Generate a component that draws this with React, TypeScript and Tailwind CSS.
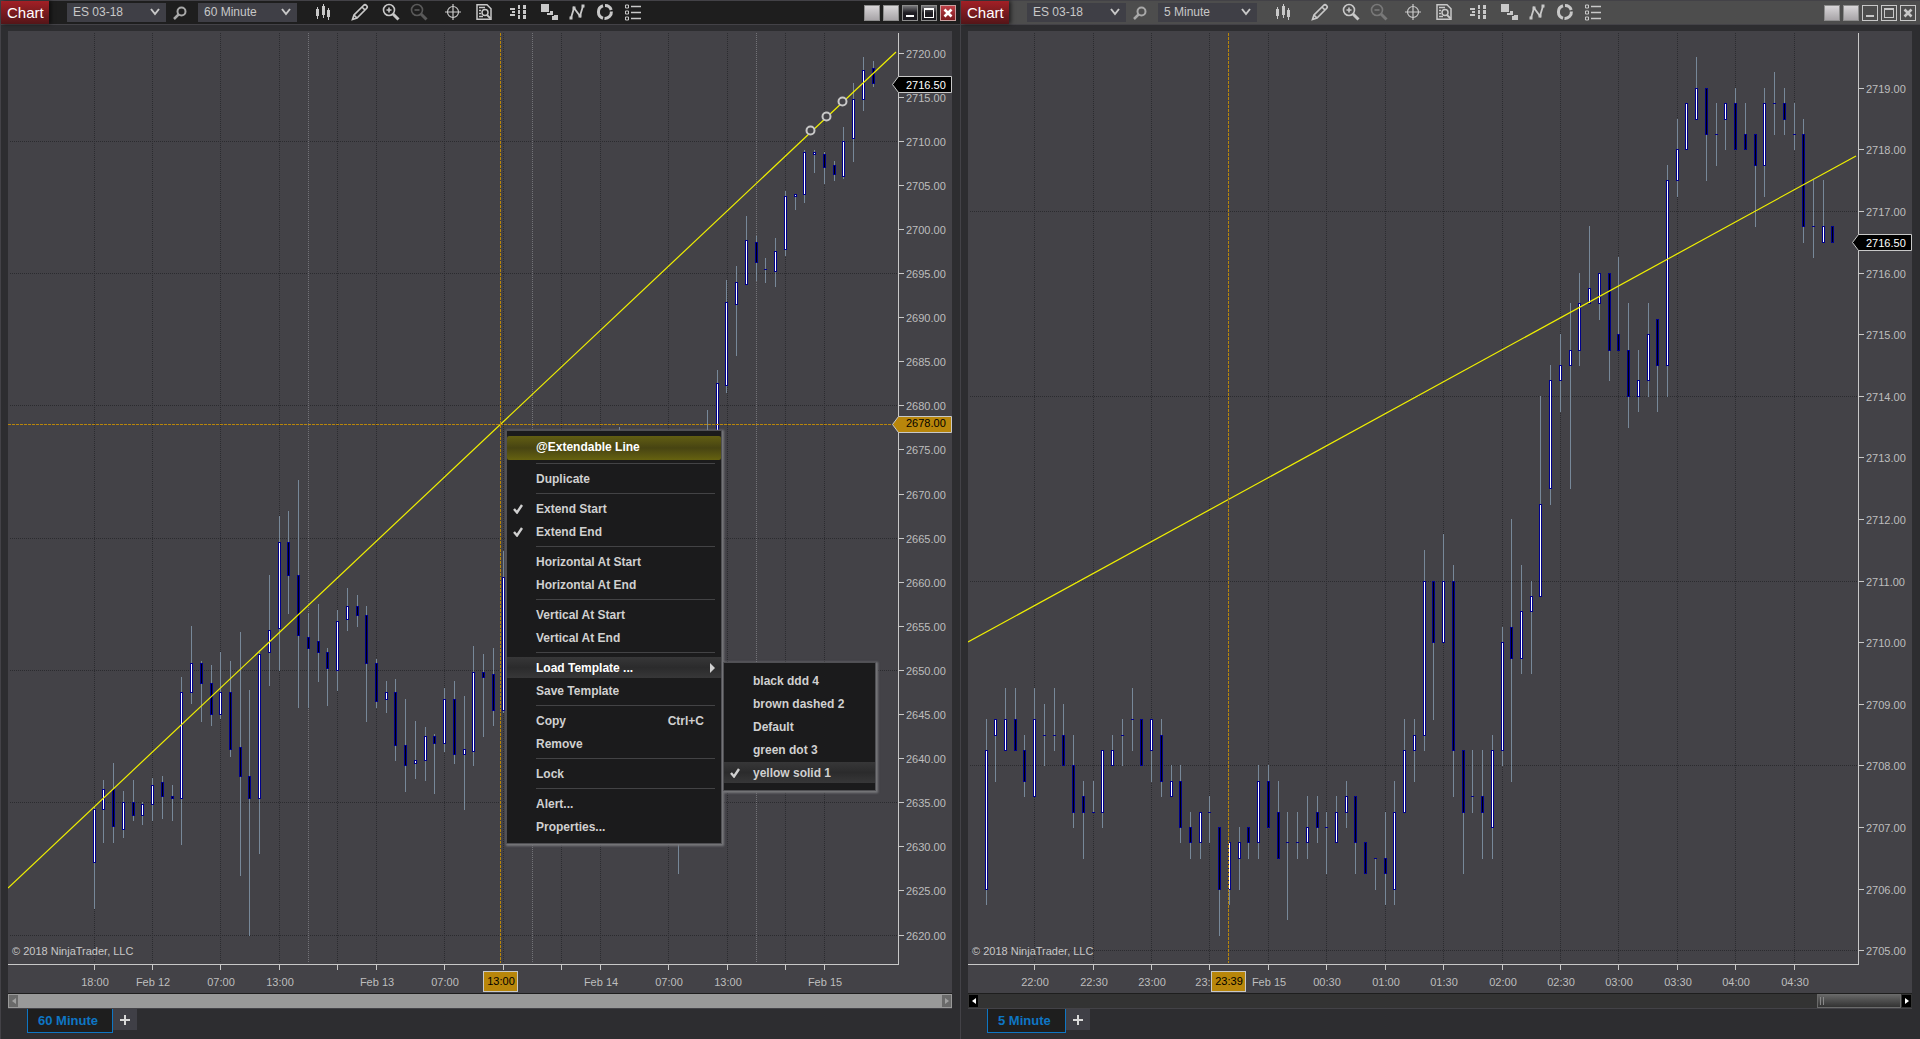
import React, { useState } from 'react'

// [bar, open, high, low, close]
type Candle = [number, number, number, number, number]

type ChartSpec = {
  symbol: string
  interval: string
  active: boolean
  candles: Candle[]
  firstBar: number
  topPrice: number
  topY: number
  pxPerPoint: number
  last: number
  priceTicks: number[]
  priceLines: number[]
  timeTicks: { x: number; label?: string; labelX?: number }[]
  sessions: number[]
  trend: [number, number, number, number]
  handles: [number, number][]
  cursorX: number
  cursorTime: string
  cursorPrice?: number
  scrollable: boolean
}

const BAR_STEP = 9.735
const FONT = '"Liberation Sans", Arial, sans-serif'

const hourCandles: Candle[] = [
  [0, 2628.25, 2634.5, 2623, 2634.25], [1, 2634.25, 2637.5, 2630.5, 2636.5], [2, 2636.5, 2639.5, 2630.5, 2632.25],
  [3, 2632, 2636.25, 2631, 2635], [4, 2635, 2637.5, 2633, 2633.5], [5, 2633.5, 2635, 2632.5, 2634.75],
  [6, 2634.75, 2637.75, 2633, 2637], [7, 2637.25, 2638, 2633.25, 2635.75], [8, 2635.75, 2637, 2633, 2635.5],
  [9, 2635.5, 2649.25, 2630.25, 2647.5], [10, 2647.5, 2655, 2646.25, 2650.75], [11, 2650.75, 2651, 2644.25, 2648.5],
  [12, 2648.5, 2650.5, 2643.75, 2645], [13, 2645, 2652, 2644.5, 2647.5], [14, 2647.5, 2651, 2640.25, 2641],
  [15, 2641.25, 2654.25, 2626.75, 2638], [16, 2638, 2647.75, 2620, 2635.5], [17, 2635.5, 2652.25, 2629.25, 2651.75],
  [18, 2652, 2660.75, 2648.25, 2654.5], [19, 2654.75, 2667.5, 2650, 2664.5], [20, 2664.5, 2668, 2656.5, 2660.75],
  [21, 2660.75, 2671.5, 2645.75, 2654], [22, 2653.75, 2656.5, 2645.75, 2652.5], [23, 2653.25, 2657.5, 2648.75, 2652],
  [24, 2652, 2652.5, 2646, 2650.25], [25, 2650, 2656.75, 2647.75, 2655.5], [26, 2655.75, 2659.25, 2654.5, 2657.25],
  [27, 2657.25, 2658.5, 2655, 2656.25], [28, 2656.25, 2657.25, 2644.25, 2650.75], [29, 2650.75, 2651.25, 2645.75, 2646.5],
  [30, 2646.75, 2648.75, 2645.25, 2647.5], [31, 2647.5, 2649, 2639.75, 2641.5], [32, 2641.5, 2646.75, 2636.25, 2639.25],
  [33, 2639.5, 2644.25, 2637.75, 2639.75], [34, 2639.75, 2643.5, 2637.5, 2642.5], [35, 2642.5, 2642.75, 2636, 2641.75],
  [36, 2641.75, 2648, 2640.75, 2646.75], [37, 2646.75, 2648.75, 2639.5, 2640.5], [38, 2640.5, 2647, 2634.25, 2641],
  [39, 2640.75, 2652.75, 2639.25, 2649.75], [40, 2649.75, 2651.75, 2642.5, 2649.25], [41, 2649.5, 2652.5, 2643.75, 2645.5],
  [42, 2645.5, 2663.5, 2645.25, 2660.5], [54, 2672, 2677.5, 2668, 2670], [60, 2640, 2650, 2627, 2645],
  [63, 2668, 2679.5, 2665, 2672], [64, 2670, 2684, 2668, 2682.5], [65, 2682.25, 2694.25, 2681.5, 2691.75],
  [66, 2691.5, 2695.75, 2685.75, 2694], [67, 2693.75, 2701.5, 2693.75, 2698.75], [68, 2698.5, 2699.25, 2694.25, 2696.25],
  [69, 2695.5, 2696.75, 2694, 2695.5], [70, 2695.25, 2699, 2693.5, 2697.5], [71, 2697.75, 2704.25, 2697, 2703.75],
  [72, 2703.75, 2704, 2702.25, 2704], [73, 2704, 2709, 2703, 2708.75], [74, 2708.5, 2709, 2706.5, 2708.75],
  [75, 2708.5, 2708.75, 2705.25, 2707], [76, 2707.25, 2707.75, 2705.5, 2706.25], [77, 2706, 2711.5, 2705.75, 2710],
  [78, 2710.25, 2716.5, 2707.75, 2714.75], [79, 2714.75, 2719.5, 2713.5, 2718], [80, 2718.25, 2719, 2716.25, 2716.5],
]

const fiveMinCandles: Candle[] = [
  [0, 2706, 2708.75, 2705.75, 2708.25], [1, 2708.5, 2708.75, 2707.75, 2708.75], [2, 2708.25, 2709.25, 2708.25, 2708.75],
  [3, 2708.75, 2709.25, 2708.25, 2708.25], [4, 2708.25, 2708.5, 2707.5, 2707.75], [5, 2707.5, 2709.25, 2707.5, 2708.75],
  [6, 2708.5, 2709, 2708, 2708.5], [7, 2708.5, 2709.25, 2708.25, 2708.5], [8, 2708.5, 2709, 2708, 2708],
  [9, 2708, 2708.5, 2707, 2707.25], [10, 2707.5, 2707.75, 2706.5, 2707.25], [11, 2707.25, 2707.75, 2707.25, 2707.25],
  [12, 2707.25, 2708.25, 2707, 2708.25], [13, 2708, 2708.5, 2708, 2708.25], [14, 2708.5, 2708.75, 2708, 2708.5],
  [15, 2708.75, 2709.25, 2708.25, 2708.75], [16, 2708.75, 2708.75, 2708, 2708], [17, 2708.25, 2708.75, 2707.75, 2708.75],
  [18, 2708.5, 2708.75, 2707.5, 2707.75], [19, 2707.5, 2708, 2707.5, 2707.75], [20, 2707.75, 2708, 2706.75, 2707],
  [21, 2707, 2707.25, 2706.5, 2706.75], [22, 2706.75, 2707.25, 2706.5, 2707.25], [23, 2707.25, 2707.5, 2706.75, 2707.25],
  [24, 2707, 2707, 2705.25, 2706], [25, 2706, 2706.75, 2705.75, 2706.75], [26, 2706.5, 2707, 2706, 2706.75],
  [27, 2707, 2707, 2706.5, 2706.75], [28, 2706.75, 2708, 2706.5, 2707.75], [29, 2707.75, 2708, 2707, 2707],
  [30, 2707.25, 2707.75, 2706.5, 2706.5], [31, 2706.75, 2707.25, 2705.5, 2706.75], [32, 2706.75, 2707.25, 2706.5, 2706.75],
  [33, 2706.75, 2707.5, 2706.5, 2707], [34, 2707.25, 2707.5, 2706.75, 2707], [35, 2707, 2707.25, 2706.25, 2707],
  [36, 2706.75, 2707.5, 2706.75, 2707.25], [37, 2707.25, 2707.75, 2707, 2707.5], [38, 2707.5, 2707.5, 2706.25, 2706.75],
  [39, 2706.75, 2706.75, 2706.25, 2706.25], [40, 2706.5, 2706.5, 2706, 2706.5], [41, 2706.5, 2707.25, 2705.75, 2706.25],
  [42, 2706, 2707.75, 2705.75, 2707.25], [43, 2707.25, 2708.75, 2707.25, 2708.25], [44, 2708.25, 2708.75, 2707.75, 2708.5],
  [45, 2708.5, 2711.5, 2708.25, 2711], [46, 2711, 2711, 2708.75, 2710], [47, 2710, 2711.75, 2710, 2711],
  [48, 2711, 2711.25, 2707.5, 2708.25], [49, 2708.25, 2708.25, 2706.25, 2707.25], [50, 2707.5, 2708.25, 2707.25, 2707.5],
  [51, 2707.5, 2708.25, 2706.5, 2707.25], [52, 2707, 2708.5, 2706.5, 2708.25], [53, 2708.25, 2710.25, 2708, 2710],
  [54, 2710.25, 2712, 2707.75, 2709.75], [55, 2709.75, 2711.25, 2709.5, 2710.5], [56, 2710.5, 2711, 2709.5, 2710.75],
  [57, 2710.75, 2714, 2710.75, 2712.25], [58, 2712.5, 2714.5, 2712.25, 2714.25], [59, 2714.25, 2715, 2713.75, 2714.5],
  [60, 2714.5, 2715.5, 2712.5, 2714.75], [61, 2714.75, 2716, 2714.5, 2715.5], [62, 2715.5, 2716.75, 2715.5, 2715.75],
  [63, 2715.5, 2716, 2715.25, 2716], [64, 2716, 2716, 2714.25, 2714.75], [65, 2715, 2716.25, 2714.75, 2714.75],
  [66, 2714.75, 2715.5, 2713.5, 2714], [67, 2714, 2714.75, 2713.75, 2714.25], [68, 2714.25, 2715.5, 2714, 2715],
  [69, 2715.25, 2715.25, 2713.75, 2714.5], [70, 2714.5, 2717.75, 2714, 2717.5], [71, 2717.5, 2718.5, 2717.25, 2718],
  [72, 2718, 2718.75, 2718, 2718.75], [73, 2718.5, 2719.5, 2718.5, 2719], [74, 2719, 2719, 2717.5, 2718.25],
  [75, 2718.25, 2718.75, 2717.75, 2718.25], [76, 2718.5, 2718.75, 2718, 2718.75], [77, 2718.75, 2719, 2718, 2718],
  [78, 2718.25, 2718.75, 2718, 2718], [79, 2718.25, 2718.25, 2716.75, 2717.75], [80, 2717.75, 2719, 2717.25, 2718.75],
  [81, 2718.75, 2719.25, 2718.25, 2718.75], [82, 2718.75, 2719, 2718.25, 2718.5], [83, 2718.25, 2718.75, 2718, 2718.25],
  [84, 2718.25, 2718.5, 2716.5, 2716.75], [85, 2716.75, 2717.5, 2716.25, 2716.75], [86, 2716.5, 2717.5, 2716.5, 2716.75],
  [87, 2716.75, 2716.75, 2716.5, 2716.5],
]

const hourChart: ChartSpec = {
  symbol: 'ES 03-18', interval: '60 Minute', active: true,
  candles: hourCandles, firstBar: 94.2, topPrice: 2720, topY: 53, pxPerPoint: 8.82, last: 2716.5,
  priceTicks: Array.from({ length: 21 }, (_, i) => 2720 - i * 5),
  priceLines: [2710, 2695, 2680, 2665, 2650, 2635, 2620],
  timeTicks: [
    { x: 94, label: '18:00' }, { x: 152, label: 'Feb 12' }, { x: 220, label: '07:00' }, { x: 279, label: '13:00' },
    { x: 337 }, { x: 376, label: 'Feb 13' }, { x: 444, label: '07:00' }, { x: 503 }, { x: 561 },
    { x: 600, label: 'Feb 14' }, { x: 668, label: '07:00' }, { x: 727, label: '13:00' }, { x: 785 }, { x: 824, label: 'Feb 15' },
  ],
  sessions: [308, 532, 756],
  trend: [8, 888, 896, 52],
  handles: [[810, 130], [826, 116], [842, 101]],
  cursorX: 500, cursorTime: '13:00', cursorPrice: 2678, scrollable: false,
}

const fiveMinChart: ChartSpec = {
  symbol: 'ES 03-18', interval: '5 Minute', active: false,
  candles: fiveMinCandles, firstBar: 26.05, topPrice: 2719, topY: 88.3, pxPerPoint: 61.6, last: 2716.5,
  priceTicks: Array.from({ length: 15 }, (_, i) => 2719 - i),
  priceLines: [2717, 2714, 2711, 2708, 2705],
  timeTicks: [
    { x: 74, label: '22:00' }, { x: 133, label: '22:30' }, { x: 191, label: '23:00' },
    { x: 249, label: '23:', labelX: 243 }, // cut short by the cursor time
    { x: 308, label: 'Feb 15' }, { x: 366, label: '00:30' }, { x: 425, label: '01:00' }, { x: 483, label: '01:30' },
    { x: 542, label: '02:00' }, { x: 600, label: '02:30' }, { x: 658, label: '03:00' }, { x: 717, label: '03:30' },
    { x: 775, label: '04:00' }, { x: 834, label: '04:30' },
  ],
  sessions: [],
  trend: [8, 642, 896, 156],
  handles: [],
  cursorX: 268, cursorTime: '23:39', scrollable: true,
}

const PriceTag: React.FC<{ y: number; price: number; gold?: boolean }> = ({ y, price, gold }) => (
  <g>
    <path d={`M892.5 ${y + 0.5}L898.5 ${y - 7.5}H951.5V${y + 8.5}H898.5Z`} fill={gold ? '#b8860b' : '#000'} stroke="#c8c8c8" />
    <text x="906" y={gold ? y + 3 : y + 5} fill={gold ? '#000' : '#fff'}>{price.toFixed(2)}</text>
  </g>
)

const Plot: React.FC<{ spec: ChartSpec }> = ({ spec }) => {
  const exactY = (p: number) => spec.topY + (spec.topPrice - p) * spec.pxPerPoint
  const yOf = (p: number) => Math.floor(exactY(p))
  const { cursorX, trend } = spec

  return (
    <svg viewBox="8 31 944 962" className="block w-full h-full bg-[#434247]" fontFamily={FONT} fontSize="11" role="img" aria-label={`${spec.symbol} ${spec.interval} chart`}>
      {/* Grid */}
      <g stroke="#2b2b2f" strokeDasharray="1 1" shapeRendering="crispEdges">
        {spec.timeTicks.map(t => <path key={t.x} d={`M${t.x + 0.5} 33V963`} />)}
        {spec.priceLines.map(p => <path key={p} d={`M10 ${yOf(p) + 0.5}H897`} />)}
      </g>
      <g stroke="#737378" strokeDasharray="1 1" shapeRendering="crispEdges">
        {spec.sessions.map(x => <path key={x} d={`M${x + 0.5} 33V963`} />)}
      </g>

      {/* Candles */}
      <g shapeRendering="crispEdges">
        {spec.candles.map(([bar, open, high, low, close]) => {
          const x = Math.floor(spec.firstBar + bar * BAR_STEP)
          const top = yOf(Math.max(open, close))
          const h = yOf(Math.min(open, close)) - top + 1
          return (
            <g key={bar}>
              <rect x={x} y={yOf(high)} width="1" height={yOf(low) - yOf(high) + 1} fill="#778899" />
              <rect x={x - 1} y={top} width="3" height={h} fill="#00008b" />
              {h > 2 && <rect x={x} y={top + 1} width="1" height={h - 2} fill={close > open ? '#fff' : '#000'} />}
            </g>
          )
        })}
      </g>

      <line x1={trend[0]} y1={trend[1]} x2={trend[2]} y2={trend[3]} stroke="#f0f000" strokeWidth="1.2" />
      {spec.handles.map(([x, y]) => <circle key={x} cx={x + 0.5} cy={y + 0.5} r="4" fill="#434247" stroke="#c8c8c8" strokeWidth="2" />)}

      <text x="12" y="955" fill="#c8c8c8">© 2018 NinjaTrader, LLC</text>

      {/* Axes */}
      <path d="M8 964.5H898.5V33" fill="none" stroke="#c8c8c8" shapeRendering="crispEdges" />
      <g fill="#bebebe">
        {spec.priceTicks.map(p => (
          <g key={p}>
            <path d={`M899 ${yOf(p) + 0.5}h5`} stroke="#c8c8c8" shapeRendering="crispEdges" />
            <text x="906" y={yOf(p) + 5}>{p.toFixed(2)}</text>
          </g>
        ))}
      </g>
      <g fill="#bebebe" textAnchor="middle">
        {spec.timeTicks.map(t => (
          <g key={t.x}>
            <path d={`M${t.x + 0.5} 965v5`} stroke="#c8c8c8" shapeRendering="crispEdges" />
            {t.label && <text x={t.labelX ?? t.x + 1} y="986">{t.label}</text>}
          </g>
        ))}
      </g>

      {/* Crosshair */}
      <g stroke="#b8860b" strokeDasharray="3 1" shapeRendering="crispEdges">
        <path d={`M${cursorX + 0.5} 33V963`} />
        {spec.cursorPrice && <path d={`M8 ${yOf(spec.cursorPrice) + 1.5}H892`} />}
      </g>
      <rect x={cursorX - 16.5} y="971.5" width="34" height="20" fill="#b8860b" stroke="#c8c8c8" />
      <text x={cursorX + 1} y="985" textAnchor="middle" fill="#000">{spec.cursorTime}</text>

      <PriceTag y={Math.round(exactY(spec.last))} price={spec.last} />
      {spec.cursorPrice && <PriceTag y={yOf(spec.cursorPrice) + 1} price={spec.cursorPrice} gold />}
    </svg>
  )
}

const tools: { name: string; className: string; icon: React.ReactNode }[] = [
  {
    name: 'Chart style', className: '',
    icon: <g fill="currentColor"><path d="M3 4h1v2h1v7H4v3H3v-3H2V6h1zM9 1h1v2h1v9h-1v3H9v-3H8V3h1zM14 5h1v2h1v7h-1v3h-1v-3h-1V7h1z" /></g>,
  },
  {
    name: 'Drawing tools', className: 'ml-[9px]',
    icon: <path d="M1.500 16.500L3 12 12.500 2.500Q14 1 15.500 2.500T15.500 5.500L6 15ZM11 4L14 7M3 12L6 15" fill="none" stroke="currentColor" strokeWidth="1.700" />,
  },
  {
    name: 'Zoom in', className: 'ml-[3px]',
    icon: <g fill="none" stroke="currentColor"><circle cx="7" cy="7" r="5.500" strokeWidth="1.600" /><path d="M4.500 7h5M7 4.500v5" strokeWidth="1.600" /><path d="M11 11l5.500 5.500" strokeWidth="3" /></g>,
  },
  {
    name: 'Zoom out', className: 'opacity-35',
    icon: <g fill="none" stroke="currentColor"><circle cx="7" cy="7" r="5.500" strokeWidth="1.600" /><path d="M4.500 7h5" strokeWidth="1.600" /><path d="M11 11l5.500 5.500" strokeWidth="3" /></g>,
  },
  {
    name: 'Crosshair', className: 'ml-[6px]',
    icon: <g fill="none" stroke="currentColor" strokeWidth="1.200"><circle cx="9" cy="9" r="5.500" /><path d="M1 9h16M9 1v16" /></g>,
  },
  {
    name: 'Data box', className: 'ml-[3px]',
    icon: <g fill="none" stroke="currentColor" strokeWidth="1.500"><path d="M2 1.700h10l4 4v10.600H2zM4 4.500h6M4 7.500h2M4 10.500h2M4 13.500h4" /><circle cx="10" cy="9.500" r="3" /><path d="M12 12l3.500 3.500" strokeWidth="2" /></g>,
  },
  {
    name: 'Chart trader', className: 'ml-[6px]',
    icon: <g fill="currentColor"><path d="M1 5h5v2H1zM3 8h3v2H3zM1 11h5v2H1zM9 2h2v4H9zM9 7h2v4H9zM9 12h2v4H9zM14 2h3v4h-3zM14 7h3v4h-3zM14 12h3v4h-3z" /></g>,
  },
  {
    name: 'Data series', className: 'ml-[3px]',
    icon: <path d="M1 1h8v8H1zM10 8h3v4H7v-2h3zM14 12h4v5h-6v-4h2z" fill="currentColor" />,
  },
  {
    name: 'Indicators', className: '',
    icon: <g fill="currentColor" stroke="currentColor"><path d="M3 15L6 5l6 8 3-10" fill="none" strokeWidth="1.800" /><path d="M1.500 13.500h3v3h-3zM4.500 3.500h3v3h-3zM10.500 11.500h3v3h-3zM13.500 1.500h3v3h-3z" stroke="none" /></g>,
  },
  {
    name: 'Strategies', className: '',
    icon: <g fill="none" stroke="currentColor" strokeWidth="3"><path d="M7 15.200A6.500 6.500 0 0 1 7 2.800M9 2.500A6.500 6.500 0 0 1 15.200 7M15.400 8.500A6.500 6.500 0 0 1 8.500 15.400" /></g>,
  },
  {
    name: 'Properties', className: '',
    icon: <g fill="none" stroke="currentColor"><path d="M7 3.500h10M7 9.500h10M7 15.500h10" strokeWidth="1.500" /><path d="M1.500 2h3v3h-3zM1.500 8h3v3h-3zM1.500 14h3v3h-3z" /></g>,
  },
]

const BarSelect: React.FC<{ label: string; value: string; options: string[] }> = ({ label, value, options }) => (
  <div className="relative">
    <select aria-label={label} defaultValue={value} className="block appearance-none w-[99px] h-[19px] pl-[6px] pb-px bg-[#3f3f46] text-[#c8c8c8] text-[12px] leading-[18px]">
      {options.map(o => <option key={o}>{o}</option>)}
    </select>
    <svg viewBox="0 0 10 8" className="absolute right-[6px] top-[5px] w-[10px] h-[8px] pointer-events-none text-[#c8c8c8]">
      <path d="M1 1L5 6 9 1" fill="none" stroke="currentColor" strokeWidth="2" />
    </svg>
  </div>
)

const TitleBar: React.FC<{ spec: ChartSpec }> = ({ spec }) => {
  const sysButton = `w-4 h-4 border flex items-center justify-center ${spec.active ? 'border-[#8c8c8c] bg-linear-to-b from-[#77777a] via-[#1e1c22] to-[#1e1c22] text-white' : 'border-[#c8c8c8] text-[#c8c8c8]'}`

  return (
    <header className={`flex items-center h-6 border-b border-[#434247] pr-1 ${spec.active ? 'bg-[#1e1e1e]' : 'bg-[#4d4d4d]'}`}>
      <h2 className="w-12 h-full pl-[6px] text-white text-[15px] leading-[23px] bg-linear-to-b from-[#a31f25] to-[#541518] shadow-[2px_0_4px_rgba(0,0,0,0.6)]">Chart</h2>
      <div className="flex items-center ml-[18px]">
        <BarSelect label="Instrument" value={spec.symbol} options={['ES 03-18', 'NQ 03-18', 'YM 03-18']} />
        <button aria-label="Find instrument" className="w-[32px] pr-1 flex justify-center text-[#a8a8a8]">
          <svg viewBox="0 0 14 14" className="w-[14px] h-[14px]" fill="none" stroke="currentColor">
            <circle cx="8.500" cy="5.500" r="4" strokeWidth="2" />
            <path d="M5.500 8.500L1 13" strokeWidth="2.500" />
          </svg>
        </button>
        <BarSelect label="Interval" value={spec.interval} options={['5 Minute', '15 Minute', '60 Minute']} />
      </div>
      <div className="flex items-center ml-3 pb-px text-[#c8c8c8]">
        {tools.map(t => (
          <button key={t.name} aria-label={t.name} className={`w-7 flex justify-center ${t.className}`}>
            <svg viewBox="0 0 18 18" className="w-[18px] h-[18px]">{t.icon}</svg>
          </button>
        ))}
      </div>
      <div className="flex gap-[3px] ml-auto">
        <button aria-label="Link instrument" className="w-4 h-4 border border-[#8c8c8c] bg-linear-to-b from-[#d8d6d8] to-[#a8a4a8]" />
        <button aria-label="Link interval" className="w-4 h-4 border border-[#8c8c8c] bg-linear-to-b from-[#d8d6d8] to-[#a8a4a8]" />
        <button aria-label="Minimize" className={sysButton}>
          <svg viewBox="0 0 14 14" className="w-[14px] h-[14px]"><path d="M3 9h8v2H3z" fill="currentColor" /></svg>
        </button>
        <button aria-label="Maximize" className={sysButton}>
          <svg viewBox="0 0 14 14" className="w-[14px] h-[14px]"><path d="M2 2h10v10H2zM3 4v7h8V4z" fill="currentColor" fillRule="evenodd" /></svg>
        </button>
        <button aria-label="Close" className={spec.active ? 'w-4 h-4 border border-[#c8a0a0] bg-linear-to-b from-[#c04048] to-[#7a1a1e] flex items-center justify-center text-white' : sysButton}>
          <svg viewBox="0 0 14 14" className="w-[14px] h-[14px]"><path d="M3.500 3.500l7 7M10.500 3.500l-7 7" stroke="currentColor" strokeWidth="2.600" /></svg>
        </button>
      </div>
    </header>
  )
}

const ScrollBar: React.FC<{ scrollable: boolean }> = ({ scrollable }) => {
  const arrow = `w-[9px] h-3 flex items-center justify-center shrink-0 ${scrollable ? 'bg-black text-white' : 'bg-[#6a6a6a] text-[#a0a0a0]'}`
  return (
    <div className={`flex items-center h-4 px-px border-t border-b border-t-[#1e1e1e] border-b-[#434247] ${scrollable ? 'bg-[#333333]' : 'bg-[#999999]'}`}>
      <button aria-label="Scroll left" className={arrow}>
        <svg viewBox="0 0 4 6" className="w-1 h-[6px]"><path d="M4 0v6L0 3z" fill="currentColor" /></svg>
      </button>
      {scrollable && (
        <div className="flex gap-[2px] items-center w-[84px] h-[14px] ml-auto mr-px pl-[2px] border border-[#6a6a6a] bg-linear-to-b from-[#666666] to-[#333333]">
          <span className="w-px h-2 bg-[#888888]" />
          <span className="w-px h-2 bg-[#888888]" />
        </div>
      )}
      <button aria-label="Scroll right" className={scrollable ? arrow : `${arrow} ml-auto`}>
        <svg viewBox="0 0 4 6" className="w-1 h-[6px]"><path d="M0 0v6l4-3z" fill="currentColor" /></svg>
      </button>
    </div>
  )
}

const ChartWindow: React.FC<{ spec: ChartSpec }> = ({ spec }) => (
  <section className="flex flex-col min-w-0 min-h-0 border-t border-l border-[#434247] bg-[#2d2d30]">
    <TitleBar spec={spec} />
    <div className="flex-1 min-h-0 mt-[6px] ml-[7px] mr-2">
      <Plot spec={spec} />
    </div>
    <div className="ml-[7px] mr-2"><ScrollBar scrollable={spec.scrollable} /></div>
    <div className="flex h-[30px] pl-[26px]">
      <button className="h-6 pl-[10px] pr-[14px] border border-t-0 border-[#0e76c4] bg-[#1e1e1e] text-[#0e76c4] text-[13px] leading-[21px] font-bold">{spec.interval}</button>
      <button aria-label="Add tab" className="w-6 h-[21px] bg-[#3f3f46] flex items-center justify-center text-[#d8d8d8]">
        <svg viewBox="0 0 10 10" className="w-[10px] h-[10px]"><path d="M4 0h2v4h4v2H6v4H4V6H0V4h4z" fill="currentColor" /></svg>
      </button>
    </div>
  </section>
)

type MenuEntry = { label: string; checked?: boolean; shortcut?: string; submenu?: boolean }

const menuGroups: MenuEntry[][] = [
  [{ label: 'Duplicate' }],
  [{ label: 'Extend Start', checked: true }, { label: 'Extend End', checked: true }],
  [{ label: 'Horizontal At Start' }, { label: 'Horizontal At End' }],
  [{ label: 'Vertical At Start' }, { label: 'Vertical At End' }],
  [{ label: 'Load Template ...', submenu: true }, { label: 'Save Template' }],
  [{ label: 'Copy', shortcut: 'Ctrl+C' }, { label: 'Remove' }],
  [{ label: 'Lock' }],
  [{ label: 'Alert...' }, { label: 'Properties...' }],
]

const templates = ['black ddd 4', 'brown dashed 2', 'Default', 'green dot 3', 'yellow solid 1']

const panel = 'absolute flex flex-col bg-[#1b1b1c] border border-[#505054] shadow-[1px_1px_2px_1px_#77777b] text-[12px] font-bold text-[#d0d0d0]'
const row = 'flex items-center w-full h-[21px] my-px text-left'
const rowActive = 'bg-linear-to-b from-[#373738] via-[#2b2b2c] to-[#373738]'

const Tick = () => (
  <svg viewBox="0 0 10 10" className="w-[10px] h-[10px]">
    <path d="M1 5L4 8.500 9 1" fill="none" stroke="#d0d0d0" strokeWidth="2.400" />
  </svg>
)

const ContextMenu: React.FC = () => {
  const [template, setTemplate] = useState('yellow solid 1')

  return (
    <div role="menu" className={`${panel} left-[506px] top-[430px] w-[216px] py-[5px]`}>
      <div className="h-6 pl-[29px] leading-[22px] text-white rounded-xs bg-linear-to-b from-[#625e12] via-[#474412] to-[#66620f]">@Extendable Line</div>
      {menuGroups.map((group, i) => (
        <div key={i} className="flex flex-col">
          <hr className="ml-[29px] mr-[6px] my-[3px] border-[#434345]" />
          {group.map(m => (
            <button key={m.label} role="menuitem" className={m.submenu ? `${row} ${rowActive} text-white` : row}>
              <span className="w-[29px] pl-[6px]">{m.checked && <Tick />}</span>
              {m.label}
              {m.shortcut && <span className="ml-auto mr-[17px]">{m.shortcut}</span>}
              {m.submenu && <svg viewBox="0 0 5 10" className="w-[5px] h-[10px] ml-auto mr-[6px]"><path d="M0 0v10l5-5z" fill="#d0d0d0" /></svg>}
            </button>
          ))}
        </div>
      ))}

      <div role="menu" className={`${panel} left-[216px] top-[231px] w-[153px] py-[6px]`}>
        {templates.map(t => (
          <button key={t} role="menuitemradio" aria-checked={t === template} onClick={() => setTemplate(t)} className={t === template ? `${row} ${rowActive}` : row}>
            <span className="w-[29px] pl-[6px]">{t === template && <Tick />}</span>
            {t}
          </button>
        ))}
      </div>
    </div>
  )
}

export default function App() {
  return (
    <main className="relative grid grid-cols-2 h-screen overflow-hidden bg-[#2d2d30] font-['Liberation_Sans',Arial,sans-serif]">
      <ChartWindow spec={hourChart} />
      <ChartWindow spec={fiveMinChart} />
      <ContextMenu />
    </main>
  )
}
